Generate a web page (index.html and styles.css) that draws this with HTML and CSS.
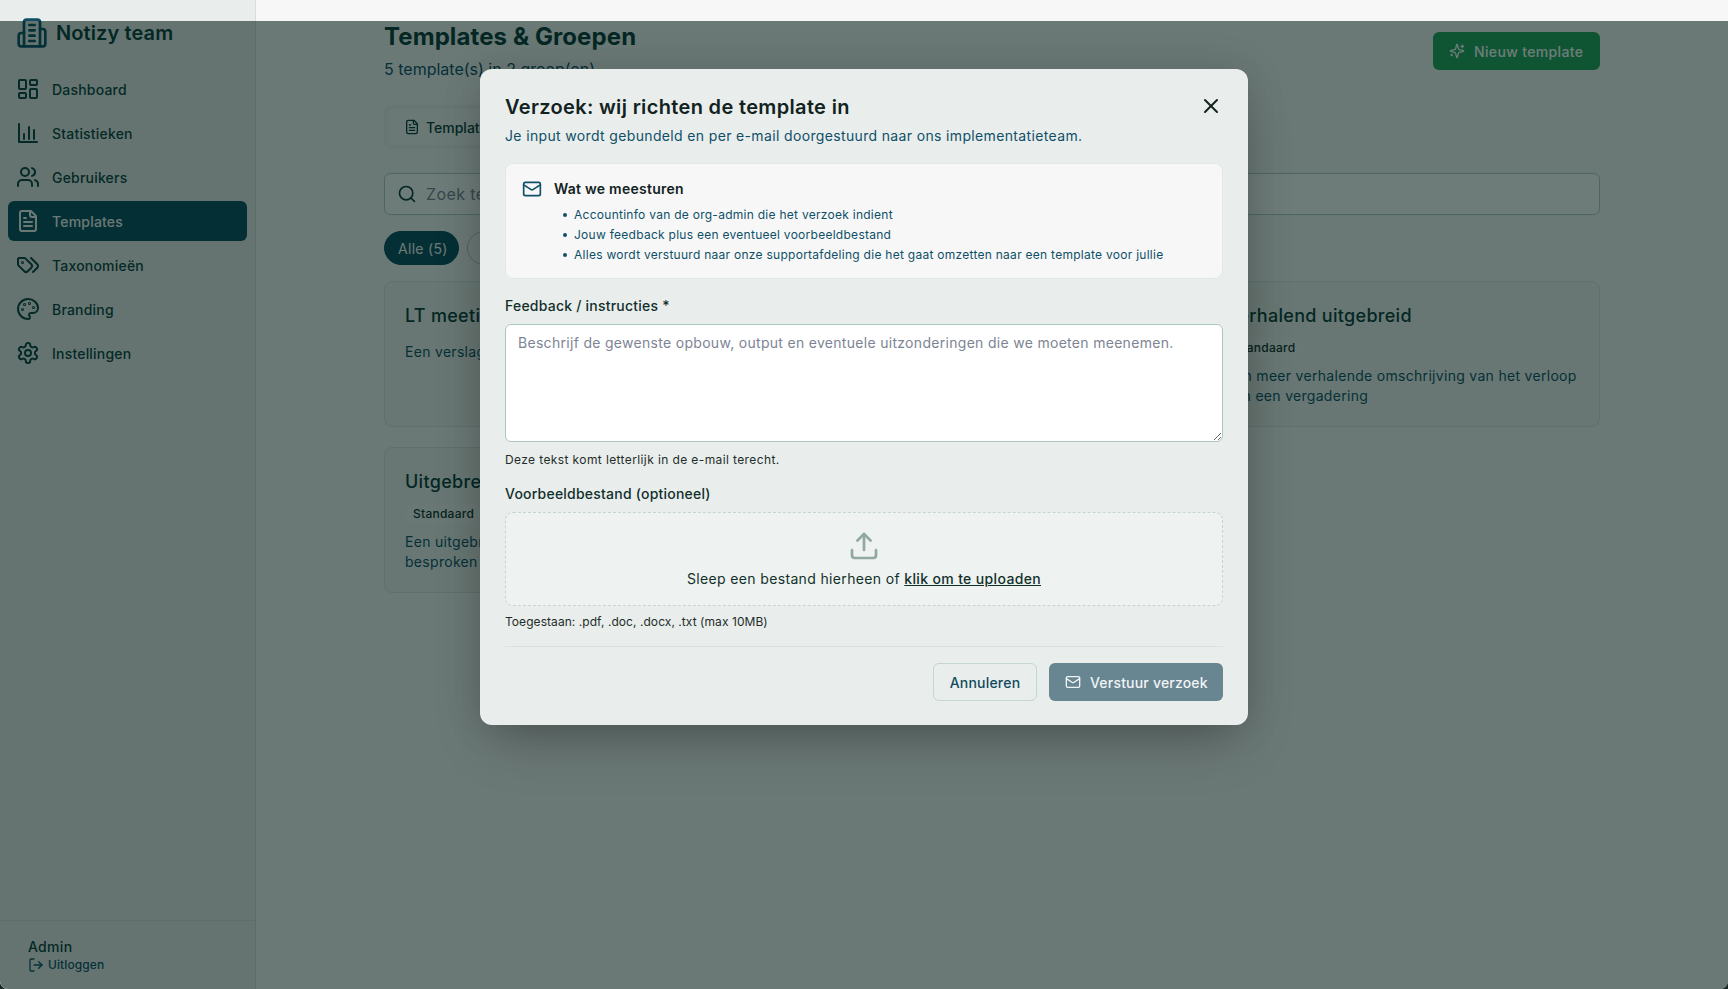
FILE: index.html
```html
<!DOCTYPE html>
<html lang="nl">
<head>
  <meta charset="UTF-8">
  <title>Templates &amp; Groepen — Notizy</title>
  <link rel="stylesheet" href="styles.css">
</head>

<body>
  <div class="app">

    <aside class="sidebar">
      <div class="brand">
        <svg class="brand-icon" viewBox="0 0 24 24"><path d="M6 22V4a2 2 0 0 1 2-2h8a2 2 0 0 1 2 2v18Z"/><path d="M6 12H4a2 2 0 0 0-2 2v6a2 2 0 0 0 2 2h2"/><path d="M18 9h2a2 2 0 0 1 2 2v9a2 2 0 0 1-2 2h-2"/><path d="M10 6h4"/><path d="M10 10h4"/><path d="M10 14h4"/><path d="M10 18h4"/></svg>
        <span class="brand-name">Notizy team</span>
      </div>

      <nav class="nav">
        <a class="nav-item">
          <svg class="icon" viewBox="0 0 24 24"><rect x="3" y="3" width="7" height="9" rx="1"/><rect x="14" y="3" width="7" height="5" rx="1"/><rect x="14" y="12" width="7" height="9" rx="1"/><rect x="3" y="16" width="7" height="5" rx="1"/></svg>
          Dashboard
        </a>
        <a class="nav-item">
          <svg class="icon" viewBox="0 0 24 24"><path d="M3 3v18h18"/><path d="M8 18v-5"/><path d="M13 18V6"/><path d="M18 18V9"/></svg>
          Statistieken
        </a>
        <a class="nav-item">
          <svg class="icon" viewBox="0 0 24 24"><path d="M16 21v-2a4 4 0 0 0-4-4H6a4 4 0 0 0-4 4v2"/><circle cx="9" cy="7" r="4"/><path d="M22 21v-2a4 4 0 0 0-3-3.87"/><path d="M16 3.13a4 4 0 0 1 0 7.75"/></svg>
          Gebruikers
        </a>
        <a class="nav-item active">
          <svg class="icon" viewBox="0 0 24 24"><path d="M15 2H6a2 2 0 0 0-2 2v16a2 2 0 0 0 2 2h12a2 2 0 0 0 2-2V7Z"/><path d="M14 2v4a2 2 0 0 0 2 2h4"/><path d="M10 9H8"/><path d="M16 13H8"/><path d="M16 17H8"/></svg>
          Templates
        </a>
        <a class="nav-item">
          <svg class="icon" viewBox="0 0 24 24"><path d="m15 5 6.3 6.3a2.4 2.4 0 0 1 0 3.4L17 19"/><path d="M9.586 5.586A2 2 0 0 0 8.172 5H3a1 1 0 0 0-1 1v5.172a2 2 0 0 0 .586 1.414L8.29 18.29a2.426 2.426 0 0 0 3.42 0l3.58-3.58a2.426 2.426 0 0 0 0-3.42z"/><circle cx="6.5" cy="9.5" r=".5"/></svg>
          Taxonomieën
        </a>
        <a class="nav-item">
          <svg class="icon" viewBox="0 0 24 24"><path d="M12 22a1 1 0 0 1 0-20 10 9 0 0 1 10 9 5 5 0 0 1-5 5h-2.25a1.75 1.75 0 0 0-1.4 2.8l.3.4a1.75 1.75 0 0 1-1.4 2.8z"/><circle cx="13.5" cy="6.5" r=".5"/><circle cx="17.5" cy="10.5" r=".5"/><circle cx="6.5" cy="12.5" r=".5"/><circle cx="8.5" cy="7.5" r=".5"/></svg>
          Branding
        </a>
        <a class="nav-item">
          <svg class="icon" viewBox="0 0 24 24"><path d="M12.22 2h-.44a2 2 0 0 0-2 2v.18a2 2 0 0 1-1 1.73l-.43.25a2 2 0 0 1-2 0l-.15-.08a2 2 0 0 0-2.73.73l-.22.38a2 2 0 0 0 .73 2.73l.15.1a2 2 0 0 1 1 1.72v.51a2 2 0 0 1-1 1.74l-.15.09a2 2 0 0 0-.73 2.73l.22.38a2 2 0 0 0 2.73.73l.15-.08a2 2 0 0 1 2 0l.43.25a2 2 0 0 1 1 1.73V20a2 2 0 0 0 2 2h.44a2 2 0 0 0 2-2v-.18a2 2 0 0 1 1-1.73l.43-.25a2 2 0 0 1 2 0l.15.08a2 2 0 0 0 2.73-.73l.22-.39a2 2 0 0 0-.73-2.73l-.15-.08a2 2 0 0 1-1-1.74v-.5a2 2 0 0 1 1-1.74l.15-.09a2 2 0 0 0 .73-2.73l-.22-.38a2 2 0 0 0-2.73-.73l-.15.08a2 2 0 0 1-2 0l-.43-.25a2 2 0 0 1-1-1.73V4a2 2 0 0 0-2-2z"/><circle cx="12" cy="12" r="3"/></svg>
          Instellingen
        </a>
      </nav>

      <div class="sidebar-footer">
        <div class="user-name">Admin</div>
        <a class="logout">
          <svg class="icon-sm" viewBox="0 0 24 24"><path d="M9 21H5a2 2 0 0 1-2-2V5a2 2 0 0 1 2-2h4"/><path d="m16 17 5-5-5-5"/><path d="M21 12H9"/></svg>
          Uitloggen
        </a>
      </div>
    </aside>

    <main class="main">
      <div class="content">
        <header class="page-head">
          <div>
            <h1>Templates &amp; Groepen</h1>
            <p class="page-sub">5 template(s) in 2 groep(en)</p>
          </div>
          <button class="btn-new">
            <svg class="icon-sm" viewBox="0 0 24 24"><path d="M9.937 15.5A2 2 0 0 0 8.5 14.063l-6.135-1.582a.5.5 0 0 1 0-.962L8.5 9.936A2 2 0 0 0 9.937 8.5l1.582-6.135a.5.5 0 0 1 .963 0L14.063 8.5A2 2 0 0 0 15.5 9.937l6.135 1.581a.5.5 0 0 1 0 .964L15.5 14.063a2 2 0 0 0-1.437 1.437l-1.582 6.135a.5.5 0 0 1-.963 0z"/><path d="M20 3v4"/><path d="M22 5h-4"/><path d="M4 17v2"/><path d="M5 18H3"/></svg>
            Nieuw template
          </button>
        </header>

        <div class="tabs">
          <div class="tab">
            <svg class="icon-sm" viewBox="0 0 24 24"><path d="M15 2H6a2 2 0 0 0-2 2v16a2 2 0 0 0 2 2h12a2 2 0 0 0 2-2V7Z"/><path d="M14 2v4a2 2 0 0 0 2 2h4"/><path d="M10 9H8"/><path d="M16 13H8"/><path d="M16 17H8"/></svg>
            Templates
          </div>
          <div class="tab tab-off">Groepen</div>
        </div>

        <div class="search">
          <svg class="icon-search" viewBox="0 0 24 24"><circle cx="11" cy="11" r="8"/><path d="m21 21-4.3-4.3"/></svg>
          <span class="search-hint">Zoek templates...</span>
        </div>

        <div class="pills">
          <span class="pill on">Alle (5)</span>
          <span class="pill">Standaard (3)</span>
        </div>

        <div class="cards">
          <div class="card">
            <h3>LT meeting</h3>
            <p class="desc plain">Een verslag van de LT meeting</p>
          </div>
          <div class="card">
            <h3>Beknopt verslag</h3>
            <span class="badge">Standaard</span>
            <p class="desc">Een kort verslag van een vergadering</p>
          </div>
          <div class="card">
            <h3>Verhalend uitgebreid</h3>
            <span class="badge">Standaard</span>
            <p class="desc">Een meer verhalende omschrijving van het verloop van een vergadering</p>
          </div>
          <div class="card">
            <h3>Uitgebreid</h3>
            <span class="badge">Standaard</span>
            <p class="desc">Een uitgebreid verslag van alles wat er is besproken in de vergadering</p>
          </div>
          <div class="card">
            <h3>Besluitenlijst</h3>
            <span class="badge">Standaard</span>
            <p class="desc">Alleen de besluiten en actiepunten</p>
          </div>
        </div>
      </div>
    </main>

    <div class="overlay">
      <div class="modal">
        <div class="modal-head">
          <h2>Verzoek: wij richten de template in</h2>
          <svg class="modal-close" viewBox="0 0 24 24"><path d="M18 6 6 18"/><path d="m6 6 12 12"/></svg>
        </div>
        <p class="modal-sub">Je input wordt gebundeld en per e-mail doorgestuurd naar ons implementatieteam.</p>

        <div class="info">
          <div class="info-head">
            <svg class="icon-info" viewBox="0 0 24 24"><rect x="2" y="4" width="20" height="16" rx="2"/><path d="m22 7-8.97 5.7a1.94 1.94 0 0 1-2.06 0L2 7"/></svg>
            <strong>Wat we meesturen</strong>
          </div>
          <ul>
            <li>Accountinfo van de org-admin die het verzoek indient</li>
            <li>Jouw feedback plus een eventueel voorbeeldbestand</li>
            <li>Alles wordt verstuurd naar onze supportafdeling die het gaat omzetten naar een template voor jullie</li>
          </ul>
        </div>

        <label class="field-label" for="feedback">Feedback / instructies *</label>
        <textarea id="feedback" placeholder="Beschrijf de gewenste opbouw, output en eventuele uitzonderingen die we moeten meenemen."></textarea>
        <p class="help">Deze tekst komt letterlijk in de e-mail terecht.</p>

        <label class="field-label second">Voorbeeldbestand (optioneel)</label>
        <div class="drop">
          <svg class="icon-upload" viewBox="0 0 24 24"><path d="M21 15v4a2 2 0 0 1-2 2H5a2 2 0 0 1-2-2v-4"/><path d="m17 8-5-5-5 5"/><path d="M12 3v12"/></svg>
          <p>Sleep een bestand hierheen of <a>klik om te uploaden</a></p>
        </div>
        <p class="help allowed">Toegestaan: .pdf, .doc, .docx, .txt (max 10MB)</p>

        <div class="modal-foot">
          <button class="btn-cancel">Annuleren</button>
          <button class="btn-send">
            <svg class="icon-sm" viewBox="0 0 24 24"><rect x="2" y="4" width="20" height="16" rx="2"/><path d="m22 7-8.97 5.7a1.94 1.94 0 0 1-2.06 0L2 7"/></svg>
            Verstuur verzoek
          </button>
        </div>
      </div>
    </div>

  </div>
</body>

</html>
```

FILE: styles.css
```css
* {
  box-sizing: border-box;
}

html, body {
  height: 100%;
  margin: 0;
}

body {
  background: #1c2a27;
  font-family: 'Inter', 'Liberation Sans', sans-serif;
  font-size: 14px;
  color: #12302b;
  overflow: hidden;
}

svg {
  fill: none;
  stroke: currentColor;
  stroke-width: 2;
  stroke-linecap: round;
  stroke-linejoin: round;
  flex-shrink: 0;
}

h1, h2, h3, p {
  margin: 0;
}

.app {
  position: relative;
  display: flex;
  height: 100vh;
  background: #f7f7f7;
  border-radius: 0 0 8px 8px;
  overflow: hidden;
}

/* sidebar */

.sidebar {
  display: flex;
  flex-direction: column;
  width: 256px;
  flex-shrink: 0;
  padding-top: 17px;
  background: #e9edec;
  border-right: 1px solid #d5dedb;
}

.brand {
  display: flex;
  align-items: center;
  gap: 8px;
  padding-left: 16px;
}

.brand-icon {
  width: 32px;
  height: 32px;
  color: #0f5068;
}

.brand-name {
  font-size: 20px;
  font-weight: 600;
  letter-spacing: 0.1px;
  color: #0c3b3a;
}

.nav {
  display: flex;
  flex-direction: column;
  gap: 4px;
  margin-top: 20px;
  padding: 0 8px;
}

.nav-item {
  display: flex;
  align-items: center;
  gap: 12px;
  height: 40px;
  padding-left: 8px;
  border-radius: 6px;
  font-weight: 500;
  letter-spacing: 0.2px;
  color: #0d3f3f;
}

.nav-item.active {
  background: #0a4f62;
  color: #f7f7f7;
}

.icon {
  width: 24px;
  height: 24px;
}

.icon-sm {
  width: 16px;
  height: 16px;
}

.sidebar-footer {
  margin-top: auto;
  height: 69px;
  padding: 16px 0 0 28px;
  border-top: 1px solid #d5dedb;
}

.user-name {
  line-height: 20px;
  font-weight: 500;
  letter-spacing: 0.3px;
  color: #0c3b3a;
}

.logout {
  display: flex;
  align-items: center;
  gap: 4px;
  font-size: 12px;
  line-height: 16px;
  font-weight: 500;
  letter-spacing: 0.1px;
  color: #0f5068;
}

/* main column */

.main {
  flex: 1;
  padding-top: 21px;
}

.content {
  width: 1216px;
  margin: 0 auto;
}

.page-head {
  display: flex;
  justify-content: space-between;
  align-items: center;
}

h1 {
  font-size: 24px;
  line-height: 32px;
  font-weight: 700;
  letter-spacing: 0.1px;
  color: #0c3b3a;
}

.page-sub {
  margin-top: 4px;
  font-size: 16px;
  line-height: 24px;
  color: #0f5068;
}

.btn-new {
  display: flex;
  align-items: center;
  gap: 9px;
  height: 38px;
  width: 167px;
  padding: 0 16px;
  border: 0;
  border-radius: 6px;
  background: #23a65e;
  color: #fff;
  font: 500 14px 'Inter', sans-serif;
  letter-spacing: 0.35px;
  white-space: nowrap;
}

.tabs {
  display: inline-flex;
  gap: 4px;
  margin-top: 24px;
  padding: 4px;
  border-radius: 8px;
  background: #eef0ef;
}

.tab {
  display: flex;
  align-items: center;
  gap: 6px;
  height: 36px;
  padding: 0 16px;
  border-radius: 6px;
  background: #f9f9f9;
  font-weight: 500;
  color: #0c3b3a;
}

.tab-off {
  background: none;
}

.search {
  display: flex;
  align-items: center;
  gap: 9px;
  height: 42px;
  margin-top: 24px;
  padding: 0 12px;
  border: 1px solid #b6cdc6;
  border-radius: 6px;
  background: #fff;
}

.icon-search {
  width: 20px;
  height: 20px;
  color: #0c3b3a;
}

.search-hint {
  font-size: 16px;
  letter-spacing: 0.4px;
  color: #7d8494;
}

.pills {
  display: flex;
  gap: 8px;
  margin-top: 16px;
}

.pill {
  display: flex;
  align-items: center;
  height: 34px;
  padding: 0 13px;
  border: 1px solid #b6cdc6;
  border-radius: 17px;
  letter-spacing: 0.3px;
  color: #0c3b3a;
  white-space: nowrap;
}

.pill.on {
  width: 75px;
  border-color: #0a4f62;
  background: #0a4f62;
  color: #f7f7f7;
}

.cards {
  display: grid;
  grid-template-columns: repeat(3, 1fr);
  grid-auto-rows: 146px;
  gap: 20px 16px;
  margin-top: 16px;
}

.card {
  padding: 20px;
  border: 1px solid #d9e4e0;
  border-radius: 8px;
  background: #f0f3f2;
}

.card h3 {
  font-size: 18px;
  line-height: 28px;
  font-weight: 500;
  letter-spacing: 0.3px;
  color: #0c3b3a;
}

.badge {
  display: inline-block;
  height: 20px;
  margin-top: 8px;
  padding: 0 8px;
  border-radius: 10px;
  background: #f5f6f6;
  font-size: 12px;
  line-height: 20px;
  font-weight: 500;
  letter-spacing: 0.25px;
  color: #12302b;
}

.desc {
  margin-top: 8px;
  line-height: 20px;
  letter-spacing: 0.3px;
  color: #0f5068;
}

.desc.plain {
  margin-top: 12px;
}

/* modal */

.overlay {
  position: absolute;
  top: 21px;
  left: 0;
  right: 0;
  bottom: 0;
  display: flex;
  justify-content: center;
  align-items: flex-start;
  padding-top: 48px;
  background: rgba(0, 25, 20, 0.57);
}

.modal {
  width: 768px;
  padding: 24px 25px;
  border-radius: 12px;
  background: #e9edec;
  box-shadow: 0 25px 50px -12px rgba(0, 0, 0, 0.25), 0 0 40px rgba(0, 0, 0, 0.12);
}

.modal-head {
  display: flex;
  justify-content: space-between;
  align-items: flex-start;
  height: 28px;
}

h2 {
  font-size: 20px;
  line-height: 28px;
  font-weight: 600;
  letter-spacing: 0.34px;
  color: #12231f;
}

.modal-close {
  width: 24px;
  height: 24px;
  margin-top: 1px;
  color: #12231f;
}

.modal-sub {
  margin-top: 5px;
  line-height: 20px;
  letter-spacing: 0.35px;
  color: #0f5068;
}

.info {
  height: 116px;
  margin-top: 17px;
  padding: 15px 16px 0;
  border: 1px solid #e3e8e6;
  border-radius: 8px;
  background: #f7f7f7;
}

.info-head {
  display: flex;
  align-items: center;
  gap: 12px;
  height: 20px;
  line-height: 20px;
  color: #12231f;
}

.info-head strong {
  font-weight: 600;
  letter-spacing: 0.25px;
}

.icon-info {
  width: 20px;
  height: 20px;
  color: #0f5068;
}

.info ul {
  margin: 6px 0 0;
  padding: 0 0 0 41px;
  list-style: none;
  font-size: 12px;
  line-height: 20px;
  letter-spacing: 0.27px;
  color: #0f5068;
}

.info li {
  display: flex;
  align-items: center;
  gap: 7px;
}

.info li::before {
  content: "";
  width: 4px;
  height: 4px;
  border-radius: 50%;
  background: currentColor;
}

.field-label {
  display: block;
  margin-top: 17px;
  line-height: 20px;
  font-weight: 500;
  letter-spacing: 0.22px;
  color: #12302b;
}

textarea {
  display: block;
  width: 100%;
  height: 118px;
  margin-top: 8px;
  padding: 8px 12px;
  border: 1px solid #a9c9bf;
  border-radius: 6px;
  background: #fff;
  font-family: 'Inter', sans-serif;
  font-size: 14px;
  line-height: 20px;
  letter-spacing: 0.3px;
}

textarea::placeholder {
  color: #7d8494;
  opacity: 1;
}

.help {
  margin-top: 8px;
  font-size: 12px;
  line-height: 20px;
  letter-spacing: 0.39px;
  color: #1f2d2a;
}

.help.allowed {
  margin-top: 6px;
  letter-spacing: 0.06px;
}

.field-label.second {
  margin-top: 14px;
}

.drop {
  display: flex;
  flex-direction: column;
  align-items: center;
  height: 94px;
  margin-top: 8px;
  padding-top: 17px;
  border: 1px dashed #c5d5cf;
  border-radius: 8px;
  background: #eef2f0;
}

.icon-upload {
  width: 32px;
  height: 32px;
  color: #8fa8a0;
}

.drop p {
  margin-top: 7px;
  line-height: 20px;
  letter-spacing: 0.35px;
  color: #12302b;
}

.drop a {
  font-weight: 500;
  text-decoration: underline;
}

.modal-foot {
  display: flex;
  justify-content: flex-end;
  gap: 12px;
  margin-top: 14px;
  padding-top: 16px;
  border-top: 1px solid #d9e2df;
}

.btn-cancel, .btn-send {
  display: flex;
  align-items: center;
  height: 38px;
  border-radius: 6px;
  font: 500 14px 'Inter', sans-serif;
  letter-spacing: 0.2px;
  white-space: nowrap;
}

.btn-cancel {
  width: 104px;
  justify-content: center;
  border: 1px solid #c3d6d0;
  background: transparent;
  color: #0f4a5e;
}

.btn-send {
  width: 174px;
  gap: 9px;
  padding: 0 16px;
  border: 0;
  background: #688592;
  color: #f1f4f5;
}
```
